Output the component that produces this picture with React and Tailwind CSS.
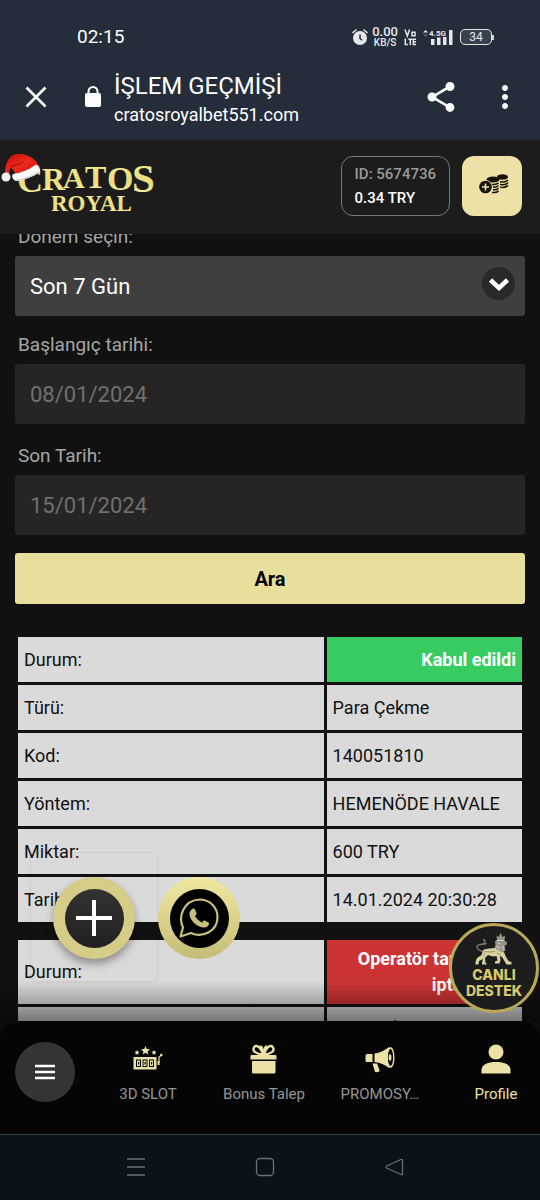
import React from "react";
import { MdShare, MdMoreVert } from "react-icons/md";

const acceptedRows = [
  ["Türü:", "Para Çekme"],
  ["Kod:", "140051810"],
  ["Yöntem:", "HEMENÖDE HAVALE"],
  ["Miktar:", "600 TRY"],
  ["Tarih:", "14.01.2024 20:30:28"],
];

function StatusBar() {
  return (
    <div className="flex h-6 items-center justify-between pl-[77px] pr-[46px] text-white">
      <span className="text-[19px] leading-6">02:15</span>
      <div className="flex items-center text-gray-200">
        <svg className="mr-1 h-4 w-4" viewBox="0 0 16 16" aria-hidden="true">
          <circle cx="8" cy="9" r="7" fill="currentColor" />
          <path d="M1 3.5 4 1M15 3.5 12 1" stroke="currentColor" strokeWidth="1.6" strokeLinecap="round" />
          <path d="M8 5.5V9.5l2 1.8" stroke="#262d3a" strokeWidth="1.5" fill="none" />
        </svg>
        <span className="mr-[6px] flex flex-col items-center font-medium">
          <span className="text-[13px] leading-[11px]">0.00</span>
          <span className="text-[10px] leading-[11px]">KB/S</span>
        </span>
        <svg className="mr-[6px] h-[18px] w-[13px]" viewBox="0 0 13 18" fill="none" stroke="currentColor" strokeWidth="1.500" role="img" aria-label="VoLTE">
          <path d="M1 1.500 3.300 8 5.600 1.500M8 4.200h3v3.500H8z" />
          <path d="M1.300 10.500v6h2.500M4.300 11.200h4M6.300 11v6M12 11.200H9.300v5.300H12M9.300 13.800H12" />
        </svg>
        <svg className="mr-[7px] h-4 w-[30px]" viewBox="0 0 30 16" fill="currentColor" aria-hidden="true">
          <path d="M0 3.500 2.500 1 5 3.500z" />
          <path d="M0 5.500 2.500 8 5 5.500z" opacity="0.3" />
          <text x="6" y="7" fontSize="8" fontWeight="700" fontFamily="Roboto">4.5G</text>
          <path d="M8 10h3.500v6H8zM14 8.500h3.500V16H14zM20 8h3.500v8H20zM26 1h3.500v15H26z" />
        </svg>
        <span className="flex items-center">
          <span className="flex h-4 w-8 items-center justify-center rounded-[5px] border border-gray-200 bg-[#3a414e] text-[12px] leading-3">34</span>
          <span className="h-[5px] w-[2px] bg-gray-300" />
        </span>
      </div>
    </div>
  );
}

function BrowserBar() {
  return (
    <div className="flex items-center pb-[14px] pl-6 pr-[17px] pt-[19px] text-white">
      <button aria-label="Kapat" className="mr-[33px] shrink-0">
        <svg className="h-6 w-6" viewBox="0 0 24 24" stroke="currentColor" strokeWidth="2.600" aria-hidden="true">
          <path d="M2.500 2.500l19 19M21.500 2.500l-19 19" />
        </svg>
      </button>
      <svg className="mr-[9px] h-6 w-6 shrink-0" viewBox="0 0 24 24" aria-hidden="true">
        <path d="M7.500 10V6.500a4.500 4.500 0 0 1 9 0V10" fill="none" stroke="currentColor" strokeWidth="2" />
        <rect x="4" y="8" width="16" height="14" rx="2" fill="currentColor" />
      </svg>
      <div className="min-w-0 flex-1">
        <h1 className="text-[24px] leading-[36px]">İŞLEM GEÇMİŞİ</h1>
        <p className="text-[18px] leading-[22px]">cratosroyalbet551.com</p>
      </div>
      <button aria-label="Paylaş" className="mr-7 shrink-0">
        <MdShare className="h-9 w-9" />
      </button>
      <button aria-label="Diğer" className="shrink-0">
        <MdMoreVert className="h-9 w-9" />
      </button>
    </div>
  );
}

function Logo() {
  return (
    <svg className="h-[64px] w-[156px]" viewBox="0 0 156 64" role="img" aria-label="Cratos Royal">
      <defs>
        <linearGradient id="gold" x1="0" y1="0" x2="0" y2="1">
          <stop offset="0" stopColor="#f7ef9d" />
          <stop offset="0.6" stopColor="#eadc7c" />
          <stop offset="1" stopColor="#fbf6b8" />
        </linearGradient>
        <linearGradient id="hat" x1="0" y1="0" x2="1" y2="1">
          <stop offset="0" stopColor="#c80d08" />
          <stop offset="0.5" stopColor="#ee2a1c" />
          <stop offset="1" stopColor="#b30d08" />
        </linearGradient>
      </defs>
      <g fill="url(#gold)" fontFamily="Liberation Serif, serif" fontWeight="700">
        <text x="17" y="38" fontSize="36">C</text>
        <text x="42" y="36" fontSize="32">R</text>
        <text x="63" y="34" fontSize="30">A</text>
        <text x="85" y="34" fontSize="32">T</text>
        <text x="107" y="36" fontSize="34">O</text>
        <text x="132" y="38" fontSize="41">S</text>
        <text x="51" y="57" fontSize="23">ROYAL</text>
      </g>
      <path d="M5 20C5 6 11-1 21 0c9 1 15 6 19 13l-24 9c-1-5-4-8-6-8l-1 7z" fill="url(#hat)" />
      <path d="M11 13c4-3 9-2 12-5" stroke="#a50a06" strokeWidth="1" fill="none" />
      <circle cx="6" cy="23" r="4.500" fill="#f3f3f3" />
      <path d="M13 20c7-1 16-4 22-9 3-1 6 4 5 7-7 5-16 8-23 9-4 0-6-5-4-7z" fill="#fafafa" />
      <path d="M16 26c7 0 16-4 23-8" stroke="#cfcfcf" strokeWidth="1.200" fill="none" />
    </svg>
  );
}

function SiteHeader() {
  return (
    <header className="flex items-center bg-[#1c1c1c] pb-[18px] pr-[18px] pt-4">
      <a href="#home" className="-my-1 mr-auto h-[64px]">
        <Logo />
      </a>
      <div className="mr-3 h-[60px] rounded-xl border border-[#777] px-[13px] py-[5px] text-[15px] font-medium leading-6">
        <p className="text-[#999]">ID: 5674736</p>
        <p className="text-white">0.34 TRY</p>
      </div>
      <button aria-label="Para yatır" className="flex h-[60px] w-[60px] items-center justify-center rounded-xl bg-[#ece1a6] pb-1 pl-1">
        <svg className="h-5 w-[30px]" viewBox="0 0 30 20" aria-hidden="true">
          <g fill="#15130a">
            <ellipse cx="23.500" cy="3" rx="5.500" ry="2.700" />
            <ellipse cx="14" cy="5.500" rx="6.500" ry="3" />
          </g>
          <g fill="none" stroke="#15130a" strokeWidth="1.500">
            <path d="M21 7.500c3 1 6 .500 8-1.500M21 10.200c3 1 6 .500 8-1.500M21 12.900c3 1 6 .500 8-1.500" />
            <path d="M13 10.300c3 .600 5 0 6.500-1.500M14 13c3 .600 4 0 5.500-1.500M14 15.700c3 .600 4 0 5.500-1.500M13 18.400c3 .600 5 0 6.500-1.500" />
          </g>
          <circle cx="6.500" cy="13" r="7" fill="#ece1a6" />
          <circle cx="6.500" cy="13" r="6.300" fill="#15130a" />
          <path d="M6.500 9.500v7M3 13h7" stroke="#ece1a6" strokeWidth="1.600" />
        </svg>
      </button>
    </header>
  );
}

function SearchForm() {
  const label = "mb-[7px] pl-[3px] text-[19px] leading-6 text-[#a6a6a6]";
  const dateInput = "h-[60px] rounded-[3px] bg-[#252525] px-[15px] text-[22px] text-[#707070]";
  return (
    <form className="-mt-[9px] flex flex-col" onSubmit={(e) => e.preventDefault()}>
      <label htmlFor="period" className={label}>Dönem seçin:</label>
      <div className="relative mb-[17px]">
        <select id="period" className="h-[60px] w-full appearance-none rounded-[3px] bg-[#3f3f3f] px-[15px] text-[22px] text-white">
          <option>Son 7 Gün</option>
        </select>
        <span className="pointer-events-none absolute right-[10px] top-[11px] flex h-[33px] w-[33px] items-center justify-center rounded-full bg-[#292929]">
          <svg className="h-[22px] w-[22px]" viewBox="0 0 22 22" fill="none" stroke="#fff" strokeWidth="4.500" aria-hidden="true">
            <path d="M2.500 7 11 15l8.500-8" />
          </svg>
        </span>
      </div>
      <label htmlFor="start" className={label}>Başlangıç tarihi:</label>
      <input id="start" type="text" disabled defaultValue="08/01/2024" className={dateInput + " mb-5"} />
      <label htmlFor="end" className={label}>Son Tarih:</label>
      <input id="end" type="text" disabled defaultValue="15/01/2024" className={dateInput + " mb-[18px]"} />
      <button type="submit" className="h-[51px] rounded-[3px] bg-[#e9df9c] text-[20px] font-bold text-black">Ara</button>
    </form>
  );
}

function TransactionTable({ status, statusClass, rows }) {
  const cell = "h-[45px] px-[6px] py-[6px]";
  return (
    <table className="w-full table-fixed border-separate border-spacing-[3px] text-[18px] leading-[26px] text-[#111]">
      <colgroup>
        <col className="w-[61%]" />
        <col />
      </colgroup>
      <tbody>
        <tr>
          <td className={cell + " bg-[#dadada]"}>Durum:</td>
          <td className={cell + " text-right font-bold text-white " + statusClass}>{status}</td>
        </tr>
        {rows.map(([name, value]) => (
          <tr key={name}>
            <td className={cell + " bg-[#dadada]"}>{name}</td>
            <td className={cell + " bg-[#dadada]"}>{value}</td>
          </tr>
        ))}
      </tbody>
    </table>
  );
}

function Lion() {
  return (
    <svg className="mb-[2px] h-8 w-[38px] shrink-0" viewBox="0 0 38 32" aria-hidden="true">
      <path d="M21.500 2.500 23.500 4 25.500 0l2 4L30 2.500l-.500 5 2.500 2-.500 2.500-2 .500 1 4.500-3.500 3.500-5-1.500-2.500-4 1-3-.500-3.500 2-2z" fill="#96948a" />
      <path d="M22 7.500h7M22.500 10l3 1M21 13l4 2M22.500 16l3 2.500M28 13v4" stroke="#dddacb" strokeWidth="0.900" fill="none" />
      <path d="M8 17c4-2 8-1.500 12.500-2 1.500 3 5 5 8.500 4l1.500 4 3 5 3 1v2.500h-5L27 24l-2-1 .5 4-1 3.500h-4.500v-2l2.500-1-1-4.500c-3 1-6 0-8.500-1l-3 3 .500 4.500 1.500 2H7v-2l1-3.500-4 2-.500 3.500H.500v-2.500l1.500-4L6.500 22z" fill="#d8d0a0" />
      <path d="M9 19c3-1 7 1 11-1M22 20l4 2M8 23l2-2" stroke="#8f8550" strokeWidth="0.900" fill="none" />
      <path d="M8 19C5 17 2 17 2 14s4-2 6-3 3-4 0-4.500M8 11c2 .500 3 0 3.500-1" fill="none" stroke="#77756a" strokeWidth="1.400" />
    </svg>
  );
}

function FloatingActions() {
  return (
    <>
      <div className="pointer-events-none absolute bottom-[39px] left-[30px] h-[130px] w-[128px] rounded-md border border-black/5 shadow-xs" />
      <button aria-label="Ekle" className="absolute bottom-[62px] left-[53px] flex h-[82px] w-[82px] items-center justify-center rounded-full bg-[#d5cc88] shadow-[0_5px_8px_rgba(0,0,0,0.35)]">
        <span className="flex h-[59px] w-[59px] items-center justify-center rounded-full bg-linear-to-t from-[#202020] to-[#333]">
          <svg className="h-9 w-9" viewBox="0 0 36 36" stroke="#fff" strokeWidth="4" aria-hidden="true">
            <path d="M18 0v36M0 18h36" />
          </svg>
        </span>
      </button>
      <a href="#whatsapp" aria-label="WhatsApp" className="absolute bottom-[62px] left-[158px] flex h-[82px] w-[82px] items-center justify-center rounded-full bg-linear-to-b from-[#f1e8a0] to-[#c5bc78]">
        <span className="flex h-[59px] w-[59px] items-center justify-center rounded-full bg-black">
          <svg className="h-10 w-10" viewBox="0 0 40 40" fill="none" stroke="#c9bf7c" aria-hidden="true">
            <path d="M1.500 38.500 4 29.500C-1 19 4 2.500 20.500 1.500 31 1.500 38.500 9.500 38.500 19c0 14-14.500 21.500-26.500 16z" strokeWidth="2.200" strokeLinejoin="round" />
            <path d="M12.500 11.500c1.500-1.500 3-1 3.500 0l1.500 3.500c.300 1-.500 2-1.500 3 1.500 3 4 5 7 6.500 1-1 1.500-2.500 2.700-2l3.800 2c1 .600.500 3-1 4-5 3.500-17-3-18-12-.200-2 .500-3.500 2-5z" fill="#c9bf7c" stroke="none" />
          </svg>
        </span>
      </a>
      <button className="absolute bottom-2 right-px flex h-[90px] w-[90px] flex-col items-center rounded-full border-3 border-[#b9a956] bg-[#1c1c1c] pt-[7px] font-['Inter','Noto_Sans',sans-serif] text-[14px] font-extrabold leading-4 text-[#d6c76c]">
        <Lion />
        <span>CANLI</span>
        <span>DESTEK</span>
      </button>
    </>
  );
}

const gold = "#ece1a6";

function SlotIcon() {
  return (
    <svg className="h-[30px] w-[30px]" viewBox="0 0 30 30" fill={gold} aria-hidden="true">
      <path d="m12.500 2 1.300 3 3.200.300-2.400 2.100.800 3.100-2.900-1.700-2.800 1.700.700-3.100L8 5.300l3.200-.300z" />
      <path d="m4 6 .800 1.500 1.700.200L5.200 9l.300 1.700L4 9.900l-1.500.800L2.800 9 1.500 7.700l1.700-.200zM21 6l.800 1.500 1.700.200L22.200 9l.300 1.700-1.500-.800-1.500.800.300-1.700-1.300-1.300 1.700-.200z" />
      <path d="M.500 13h23v12.500H.500zM24.500 17h2v4h-2z" />
      <path d="M26 19v-6l2-1.500" fill="none" stroke={gold} strokeWidth="1.200" />
      <circle cx="28.300" cy="11" r="1.300" />
      <g fill="#050505"><path d="M3 15.500h5V23H3zM9.500 15.500h5V23h-5zM16 15.500h5V23h-5z" /></g>
      <g fill={gold}><path d="M4 16.500h3V22H4zM10.500 16.500h3V22h-3zM17 16.500h3V22h-3z" /></g>
      <g fill="#050505"><path d="M5 18h1.200v2.500H5zM11.500 18h1.200v2.500h-1.200zM18 18h1.200v2.500H18z" /></g>
    </svg>
  );
}

function GiftIcon() {
  return (
    <svg className="h-[30px] w-[30px]" viewBox="0 0 30 30" fill={gold} aria-hidden="true">
      <path d="M2.500 11h24a1 1 0 0 1 1 1v3.500h-26V12a1 1 0 0 1 1-1zM3 17h23.500v11a1.500 1.500 0 0 1-1.500 1.500H4.500A1.500 1.500 0 0 1 3 28z" />
      <path d="M14 10.500C7 10 3 7 5 3.500S12 3 14 10.500zM15 10.500c7-.5 11-3.500 9-7S17 3 15 10.500z" fill="none" stroke={gold} strokeWidth="2.400" />
      <path d="M14.500 10C10 6 9 2 11 1.500s3 1 3.500 4c.5-3 1.500-4.500 3.500-4s1 4.500-3.500 8.500z" />
    </svg>
  );
}

function MegaphoneIcon() {
  return (
    <svg className="h-[30px] w-[30px]" viewBox="0 0 30 30" fill={gold} aria-hidden="true">
      <path d="M2 10h5.500v8H2a1.500 1.500 0 0 1-1.500-1.500v-5A1.500 1.500 0 0 1 2 10z" />
      <path d="M9.500 9.500C15 9 20 6 24 3v21c-4-3-9-5.500-14.500-6z" />
      <ellipse cx="25.500" cy="13.500" rx="4" ry="10.500" />
      <ellipse cx="25.500" cy="13.500" rx="2.600" ry="8.500" fill="#050505" />
      <ellipse cx="25" cy="13.500" rx="1.400" ry="3.200" />
      <path d="M7.500 19.500h4.500l2.500 6.500c.300 1-.2 1.500-1 1.700l-2 .500c-1 .200-1.500-.200-1.700-1z" />
    </svg>
  );
}

function PersonIcon() {
  return (
    <svg className="h-[30px] w-[30px]" viewBox="0 0 30 30" fill={gold} aria-hidden="true">
      <circle cx="15" cy="8" r="7.500" />
      <path d="M.500 29.500v-3.500c0-5.500 6.500-8 14.500-8s14.500 2.500 14.500 8v3.500z" />
    </svg>
  );
}

const tabs = [
  { label: "3D SLOT", Icon: SlotIcon },
  { label: "Bonus Talep", Icon: GiftIcon },
  { label: "PROMOSY…", Icon: MegaphoneIcon },
  { label: "Profile", Icon: PersonIcon, active: true },
];

function TabBar() {
  return (
    <nav className="flex items-start rounded-t-[20px] bg-[#050505] pb-[30px] pl-[15px] pr-1 pt-[21px]">
      <button aria-label="Menü" className="mr-[33px] flex h-[60px] w-[60px] items-center justify-center rounded-full bg-[#343434]">
        <svg className="h-4 w-5" viewBox="0 0 20 16" stroke="#fff" strokeWidth="2.400" aria-hidden="true">
          <path d="M0 2h20M0 8h20M0 14h20" />
        </svg>
      </button>
      <div className="flex flex-1 justify-between pt-[2px]">
        {tabs.map(({ label, Icon, active }) => (
          <a key={label} href="#tab" className="flex w-20 flex-col items-center gap-[10px] whitespace-nowrap text-[15px] leading-5">
            <Icon />
            <span className={active ? "text-[#ece1a6]" : "text-[#969696]"}>{label}</span>
          </a>
        ))}
      </div>
    </nav>
  );
}

function SystemNav() {
  return (
    <div className="flex items-center justify-center gap-[105px] border-t border-[#3b4044] bg-[#0b1219] pb-[21px] pr-[10px] pt-5 text-[#697078]">
      <button aria-label="Son uygulamalar">
        <svg className="h-6 w-6" viewBox="0 0 24 24" stroke="currentColor" strokeWidth="1.500" aria-hidden="true">
          <path d="M3 4h18M3 12h18M3 20h18" />
        </svg>
      </button>
      <button aria-label="Ana ekran">
        <svg className="h-6 w-6" viewBox="0 0 24 24" fill="none" stroke="currentColor" strokeWidth="1.300" aria-hidden="true">
          <rect x="3.500" y="3.500" width="17" height="17" rx="3.500" />
        </svg>
      </button>
      <button aria-label="Geri">
        <svg className="h-6 w-6" viewBox="0 0 24 24" fill="none" stroke="currentColor" strokeWidth="1.300" strokeLinejoin="round" aria-hidden="true">
          <path d="M19 4.500c1-.500 1.500 0 1.500 1v13c0 1-.500 1.500-1.500 1L4.500 13c-.800-.500-.800-1.500 0-2z" />
        </svg>
      </button>
    </div>
  );
}

export default function App() {
  return (
    <div className="flex h-screen flex-col bg-[#0c0c0c] font-['Roboto','Noto_Sans',sans-serif]">
      <div className="bg-[#262d3a] pt-[25px]">
        <StatusBar />
        <BrowserBar />
      </div>
      <SiteHeader />
      <div className="relative min-h-0 flex-1">
        <main className="flex h-full flex-col overflow-hidden bg-[#111] px-[15px]">
          <SearchForm />
          <div className="mt-[30px] flex flex-col gap-3">
            <TransactionTable status="Kabul edildi" statusClass="bg-[#36cc62]" rows={acceptedRows} />
            <TransactionTable
              status="Operatör tarafından iptal edildi"
              statusClass="bg-[#cc3333]"
              rows={[["Türü:", "Çekme İptal"]]}
            />
          </div>
        </main>
        <div className="pointer-events-none absolute inset-x-0 bottom-0 h-10 bg-linear-to-t from-black/45 to-transparent" />
        <FloatingActions />
      </div>
      <TabBar />
      <SystemNav />
    </div>
  );
}
